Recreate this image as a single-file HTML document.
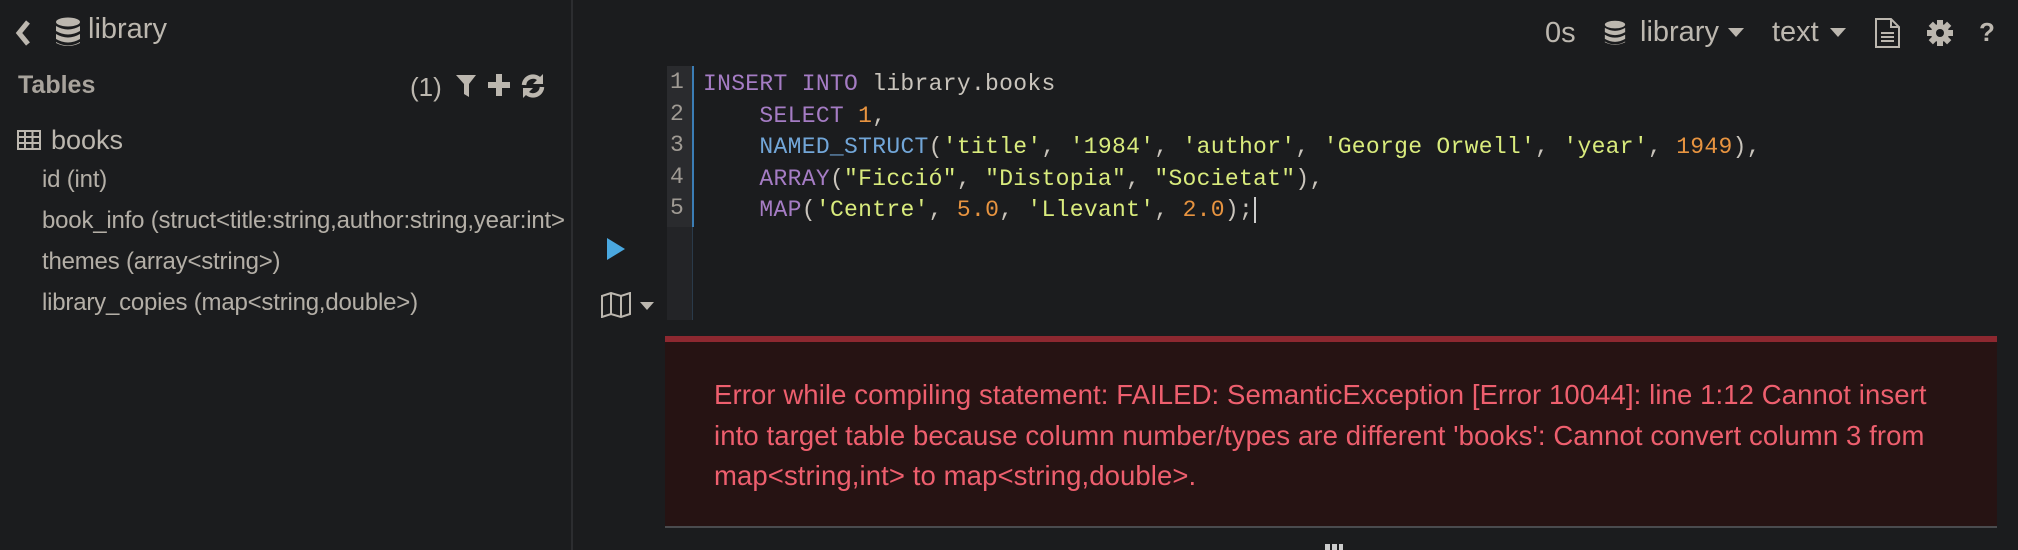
<!DOCTYPE html>
<html><head><meta charset="utf-8">
<style>
*{margin:0;padding:0;box-sizing:border-box}
body{width:2018px;height:550px;background:#1b1c1e;font-family:"Liberation Sans",sans-serif;color:#bcb7af;position:relative;overflow:hidden}
.a{position:absolute;white-space:nowrap}
.side{position:absolute;left:0;top:0;width:573px;height:550px;border-right:2px solid #2c2d30;overflow:hidden}
.row{font-size:24px;color:#b4afa7;left:42px;letter-spacing:-0.2px}
.code{position:absolute;left:703px;top:69px;font-family:"Liberation Mono",monospace;font-size:23px;line-height:31.5px;color:#c9c4bc;white-space:pre;letter-spacing:0.3px}
.k{color:#a57cc4}.f{color:#72a6d8}.s{color:#d9eb7d}.n{color:#e89440}
.gut{position:absolute;left:667px;top:66px;width:26px;height:254px;background:#232427;border-right:1px solid #2a3a4a}
.gut .hl{position:absolute;left:0;top:0;width:27px;height:161px;background:#2a2b2e;border-right:2px solid #3b7db5}
.ln{position:absolute;left:670px;font-family:"Liberation Mono",monospace;font-size:23px;color:#a09b94}
.err{position:absolute;left:665px;top:336px;width:1332px;height:192px;background:#261313;border-top:6px solid #8d2830;border-bottom:2px solid #4a4b4e}
.err div{position:absolute;left:49px;top:33px;font-size:27.5px;line-height:40.5px;color:#ee5f6e;letter-spacing:0.1px;white-space:nowrap}
</style></head><body>
<div class="side">
<svg class="a" style="left:14px;top:19px" width="18" height="28" viewBox="0 0 18 28"><path d="M14 3 L5 14 L14 25" stroke="#bcb7af" stroke-width="5" fill="none"/></svg>
<svg class="a" style="left:55px;top:17px" width="26" height="30" viewBox="0 0 26 30"><ellipse cx="13" cy="5" rx="12" ry="4.5" fill="#bcb7af"/><path d="M1 9 q12 7 24 0 v5 q-12 7 -24 0z M1 17 q12 7 24 0 v5 q-12 7 -24 0z M1 25 q12 7 24 0 v1 q-12 6 -24 0z" fill="#bcb7af"/></svg>
<div class="a" style="left:88px;top:13px;font-size:29px;color:#bcb7af">library</div>
<div class="a" style="left:18px;top:71px;font-size:25px;font-weight:bold;color:#a8a39c">Tables</div>
<div class="a" style="left:410px;top:72px;font-size:26px;color:#bcb7af">(1)</div>
<svg class="a" style="left:455px;top:74px" width="22" height="24" viewBox="0 0 22 24"><path d="M1 1 H21 L14 10 V23 L9 20 V10Z" fill="#bcb7af"/></svg>
<svg class="a" style="left:488px;top:74px" width="22" height="22" viewBox="0 0 22 22"><path d="M8 0h6v8h8v6h-8v8h-6v-8h-8v-6h8z" fill="#bcb7af"/></svg>
<svg class="a" style="left:520px;top:73px" width="26" height="26" viewBox="0 0 26 26"><path d="M4 12 A9 9 0 0 1 20 7" stroke="#bcb7af" stroke-width="4.5" fill="none"/><path d="M23 1 V11 H13Z" fill="#bcb7af"/><path d="M22 14 A9 9 0 0 1 6 19" stroke="#bcb7af" stroke-width="4.5" fill="none"/><path d="M3 25 V15 H13Z" fill="#bcb7af"/></svg>
<svg class="a" style="left:17px;top:130px" width="24" height="20" viewBox="0 0 24 20"><rect x="1" y="1" width="22" height="18" fill="none" stroke="#bcb7af" stroke-width="2"/><path d="M1 7H23M1 13H23M8 1V19M15.5 1V19" stroke="#bcb7af" stroke-width="2"/></svg>
<div class="a" style="left:51px;top:125px;font-size:27px;color:#bcb7af">books</div>
<div class="a row" style="top:166px">id (int)</div>
<div class="a row" style="top:207px">book_info (struct&lt;title:string,author:string,year:int&gt;</div>
<div class="a row" style="top:248px">themes (array&lt;string&gt;)</div>
<div class="a row" style="top:289px">library_copies (map&lt;string,double&gt;)</div>
</div>

<div class="a" style="left:1545px;top:17px;font-size:29px;color:#bcb7af">0s</div>
<svg class="a" style="left:1604px;top:19px" width="22" height="28" viewBox="0 0 26 30"><ellipse cx="13" cy="5" rx="12" ry="4.5" fill="#bcb7af"/><path d="M1 9 q12 7 24 0 v5 q-12 7 -24 0z M1 17 q12 7 24 0 v5 q-12 7 -24 0z M1 25 q12 7 24 0 v1 q-12 6 -24 0z" fill="#bcb7af"/></svg>
<div class="a" style="left:1640px;top:16px;font-size:29px;color:#bcb7af">library</div>
<svg class="a" style="left:1728px;top:28px" width="16" height="10"><path d="M0 0H16L8 9Z" fill="#bcb7af"/></svg>
<div class="a" style="left:1772px;top:16px;font-size:29px;color:#bcb7af">text</div>
<svg class="a" style="left:1830px;top:28px" width="16" height="10"><path d="M0 0H16L8 9Z" fill="#bcb7af"/></svg>
<svg class="a" style="left:1874px;top:18px" width="26" height="30" viewBox="0 0 26 30"><path d="M2 1H17L25 9V29H2Z" fill="none" stroke="#bcb7af" stroke-width="2"/><path d="M17 1V9H25" fill="none" stroke="#bcb7af" stroke-width="2"/><path d="M7 15H20M7 19H20M7 23H20" stroke="#bcb7af" stroke-width="2"/></svg>
<svg class="a" style="left:1927px;top:20px" width="26" height="26" viewBox="0 0 26 26"><g fill="#bcb7af"><circle cx="13" cy="13" r="9"/><rect x="10" y="0" width="6" height="26"/><rect x="0" y="10" width="26" height="6"/><rect x="10" y="0" width="6" height="26" transform="rotate(45 13 13)"/><rect x="10" y="0" width="6" height="26" transform="rotate(-45 13 13)"/></g><circle cx="13" cy="13" r="4" fill="#1b1c1e"/></svg>
<div class="a" style="left:1979px;top:17px;font-size:26px;font-weight:bold;color:#bcb7af">?</div>

<div class="gut"><div class="hl"></div></div>
<div class="ln" style="top:69px">1</div>
<div class="ln" style="top:100.5px">2</div>
<div class="ln" style="top:132px">3</div>
<div class="ln" style="top:163.5px">4</div>
<div class="ln" style="top:195px">5</div>
<div class="code"><span class="k">INSERT INTO</span> library.books
    <span class="k">SELECT</span> <span class="n">1</span>,
    <span class="f">NAMED_STRUCT</span>(<span class="s">'title'</span>, <span class="s">'1984'</span>, <span class="s">'author'</span>, <span class="s">'George Orwell'</span>, <span class="s">'year'</span>, <span class="n">1949</span>),
    <span class="k">ARRAY</span>(<span class="s">"Ficció"</span>, <span class="s">"Distopia"</span>, <span class="s">"Societat"</span>),
    <span class="k">MAP</span>(<span class="s">'Centre'</span>, <span class="n">5.0</span>, <span class="s">'Llevant'</span>, <span class="n">2.0</span>);<span style="border-left:2px solid #ccc;margin-left:1px"></span></div>

<svg class="a" style="left:607px;top:238px" width="18" height="22"><path d="M0 0L18 11L0 22Z" fill="#4aa8e0"/></svg>
<svg class="a" style="left:601px;top:292px" width="30" height="26" viewBox="0 0 30 26"><path d="M1 4L10 1L20 4L29 1V22L20 25L10 22L1 25Z M10 1V22 M20 4V25" fill="none" stroke="#bcb7af" stroke-width="2"/></svg>
<svg class="a" style="left:640px;top:302px" width="14" height="8"><path d="M0 0H14L7 8Z" fill="#bcb7af"/></svg>

<div class="err"><div>Error while compiling statement: FAILED: SemanticException [Error 10044]: line 1:12 Cannot insert<br>into target table because column number/types are different 'books': Cannot convert column 3 from<br>map&lt;string,int&gt; to map&lt;string,double&gt;.</div></div>
<div class="a" style="left:1325px;top:544px;width:18px;height:6px;background:repeating-linear-gradient(90deg,#ccc 0 5px,transparent 5px 7px)"></div>
</body></html>
